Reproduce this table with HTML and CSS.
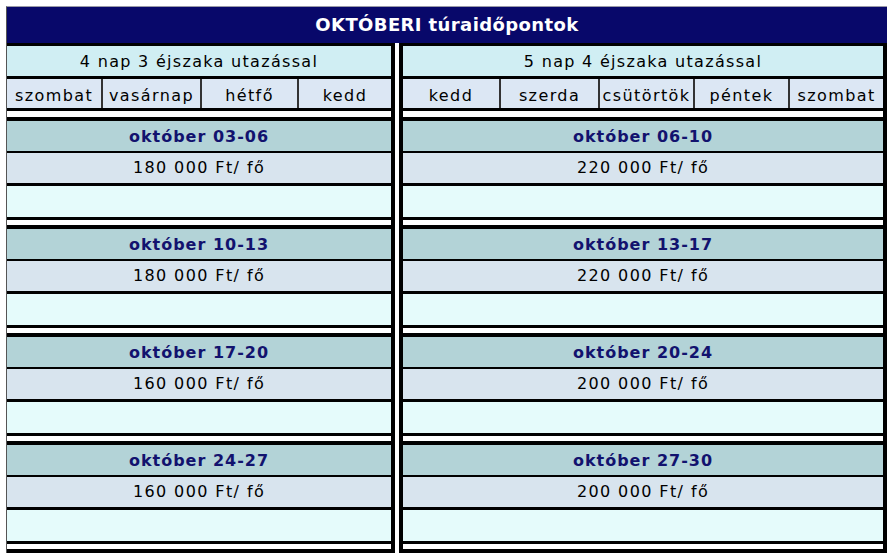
FILE: index.html
```html
<!DOCTYPE html>
<html lang="hu">
<head>
<meta charset="utf-8">
<title>OKTÓBERI túraidőpontok</title>
<link rel="stylesheet" href="styles.css">
</head>
<body>
<div class="page">
  <div class="title">OKTÓBERI túraidőpontok</div>
  <div class="cols">
    <div class="col col-left">
      <div class="box head">
        <div class="sub">4 nap 3 éjszaka utazással</div>
        <div class="days days-left">
          <span>szombat</span><span>vasárnap</span><span>hétfő</span><span>kedd</span>
        </div>
      </div>
      <div class="box block">
        <div class="date">október 03-06</div>
        <div class="price">180 000 Ft/ fő</div>
        <div class="empty"></div>
      </div>
      <div class="box block">
        <div class="date">október 10-13</div>
        <div class="price">180 000 Ft/ fő</div>
        <div class="empty"></div>
      </div>
      <div class="box block">
        <div class="date">október 17-20</div>
        <div class="price">160 000 Ft/ fő</div>
        <div class="empty"></div>
      </div>
      <div class="box block">
        <div class="date">október 24-27</div>
        <div class="price">160 000 Ft/ fő</div>
        <div class="empty"></div>
      </div>
      <div class="tail"></div>
    </div>
    <div class="col col-right">
      <div class="box head">
        <div class="sub">5 nap 4 éjszaka utazással</div>
        <div class="days days-right">
          <span>kedd</span><span>szerda</span><span>csütörtök</span><span>péntek</span><span>szombat</span>
        </div>
      </div>
      <div class="box block">
        <div class="date">október 06-10</div>
        <div class="price">220 000 Ft/ fő</div>
        <div class="empty"></div>
      </div>
      <div class="box block">
        <div class="date">október 13-17</div>
        <div class="price">220 000 Ft/ fő</div>
        <div class="empty"></div>
      </div>
      <div class="box block">
        <div class="date">október 20-24</div>
        <div class="price">200 000 Ft/ fő</div>
        <div class="empty"></div>
      </div>
      <div class="box block">
        <div class="date">október 27-30</div>
        <div class="price">200 000 Ft/ fő</div>
        <div class="empty"></div>
      </div>
      <div class="tail"></div>
    </div>
  </div>
</div>
</body>
</html>
```
FILE: styles.css
```css
* { box-sizing: border-box; }
html, body { margin: 0; padding: 0; background: #ffffff; }
body {
  font-family: "DejaVu Sans", "Liberation Sans", sans-serif;
  color: #000000;
  font-size: 16px;
}
.page {
  margin: 6px 0 0 6px;
  width: 881px;
  border-left: 1px solid #555555;
  border-top: 1px solid #9a9aa8;
}
.title {
  height: 36px;
  background: #08086a;
  color: #ffffff;
  font-weight: bold;
  font-size: 18px;
  letter-spacing: 0.4px;
  display: flex;
  align-items: center;
  justify-content: center;
  padding-bottom: 1px;
}
.cols {
  display: flex;
  gap: 4px;
  align-items: flex-start;
}
.col { display: flex; flex-direction: column; gap: 5px; }
.col-left { width: 388px; border-right: 4px solid #000; }
.col-right { width: 488px; border-left: 4px solid #000; border-right: 4px solid #000; }
.head { margin-bottom: 1px; }
.box {
  border-top: 3px solid #000;
  border-bottom: 3px solid #000;
  display: flex;
  flex-direction: column;
}
.block { border-top-width: 4px; }
.tail { height: 4px; background: #000; }
.sub {
  height: 33px;
  background: #d0eef3;
  display: flex;
  align-items: center;
  justify-content: center;
  letter-spacing: 1.3px;
  border-bottom: 3px solid #000;
}
.days {
  display: grid;
  height: 29px;
  background: #dce7f4;
}
.days-left { grid-template-columns: 94px 99px 97px 94px; }
.days-right { grid-template-columns: 96px 99px 95px 95px 95px; }
.days span {
  display: flex;
  align-items: center;
  justify-content: center;
  letter-spacing: 1.4px;
  padding-top: 3px;
}
.days span + span { border-left: 2px solid #333; }
.date {
  height: 32px;
  background: #b3d3d7;
  color: #12126e;
  font-weight: bold;
  letter-spacing: 1px;
  display: flex;
  align-items: center;
  justify-content: center;
  border-bottom: 2px solid #000;
}
.price {
  height: 33px;
  background: #d8e4ee;
  display: flex;
  align-items: center;
  justify-content: center;
  letter-spacing: 1.4px;
  border-bottom: 3px solid #000;
  padding-bottom: 2px;
}
.empty {
  height: 31px;
  background: #e5fbfb;
}
```
